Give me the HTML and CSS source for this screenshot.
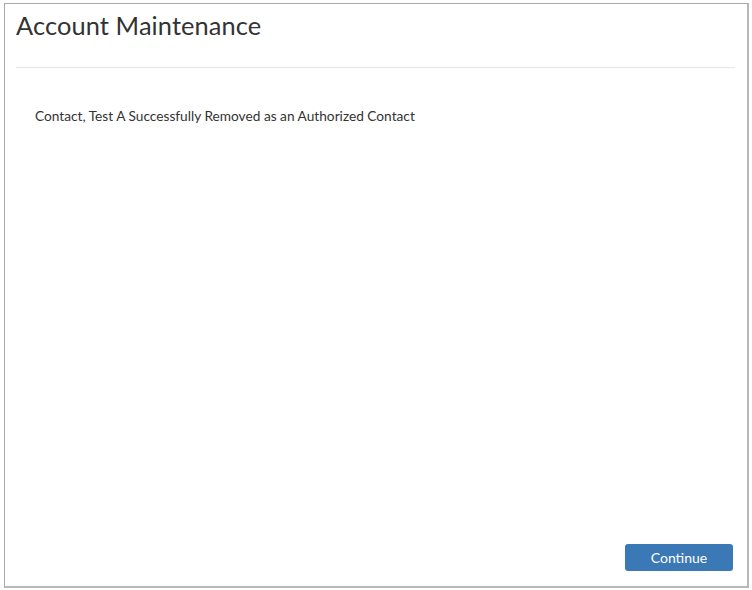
FILE: index.html
```html
<!DOCTYPE html>
<html>
<head>
<meta charset="utf-8">
<link rel="stylesheet" href="styles.css">
</head>
<body>
<div class="frame">
  <header class="head">
    <h1 class="title">Account Maintenance</h1>
  </header>
  <main class="content">
    <p class="msg">Contact, Test A Successfully Removed as an Authorized Contact</p>
  </main>
  <footer class="foot">
    <button class="btn">Continue</button>
  </footer>
</div>
</body>
</html>
```

FILE: styles.css
```css
html, body { margin: 0; padding: 0; background: #fff; }
body {
  width: 752px; height: 590px;
  padding: 3px 0 0 4px;
  box-sizing: border-box;
  font-family: "Lato", "Open Sans", sans-serif;
  color: #333;
}
.frame {
  width: 745px; height: 585px;
  box-sizing: border-box;
  border: 1px solid #a9a9a9;
  border-right: 2px solid #b8b8b8;
  border-bottom: 2px solid #b8b8b8;
  display: flex; flex-direction: column;
  padding: 0 12px 0 11px;
}
.head {
  height: 64px;
  border-bottom: 1px solid #e6e6e6;
  box-sizing: border-box;
}
.title {
  margin: 0; padding-top: 7px;
  font-weight: 400; font-size: 25.4px; line-height: 28px;
  color: #333; letter-spacing: 0.1px;
}
.content { flex: 1; padding: 40px 0 0 19px; }
.msg { margin: 0; font-size: 13.7px; line-height: 16px; color: #333; }
.foot { display: flex; justify-content: flex-end; padding: 0 2px 15px 0; }
.btn {
  width: 108px; height: 27px;
  background: #3b78b6; color: #fff;
  border: none; border-radius: 3px;
  font-family: inherit; font-size: 14px;
}
```
